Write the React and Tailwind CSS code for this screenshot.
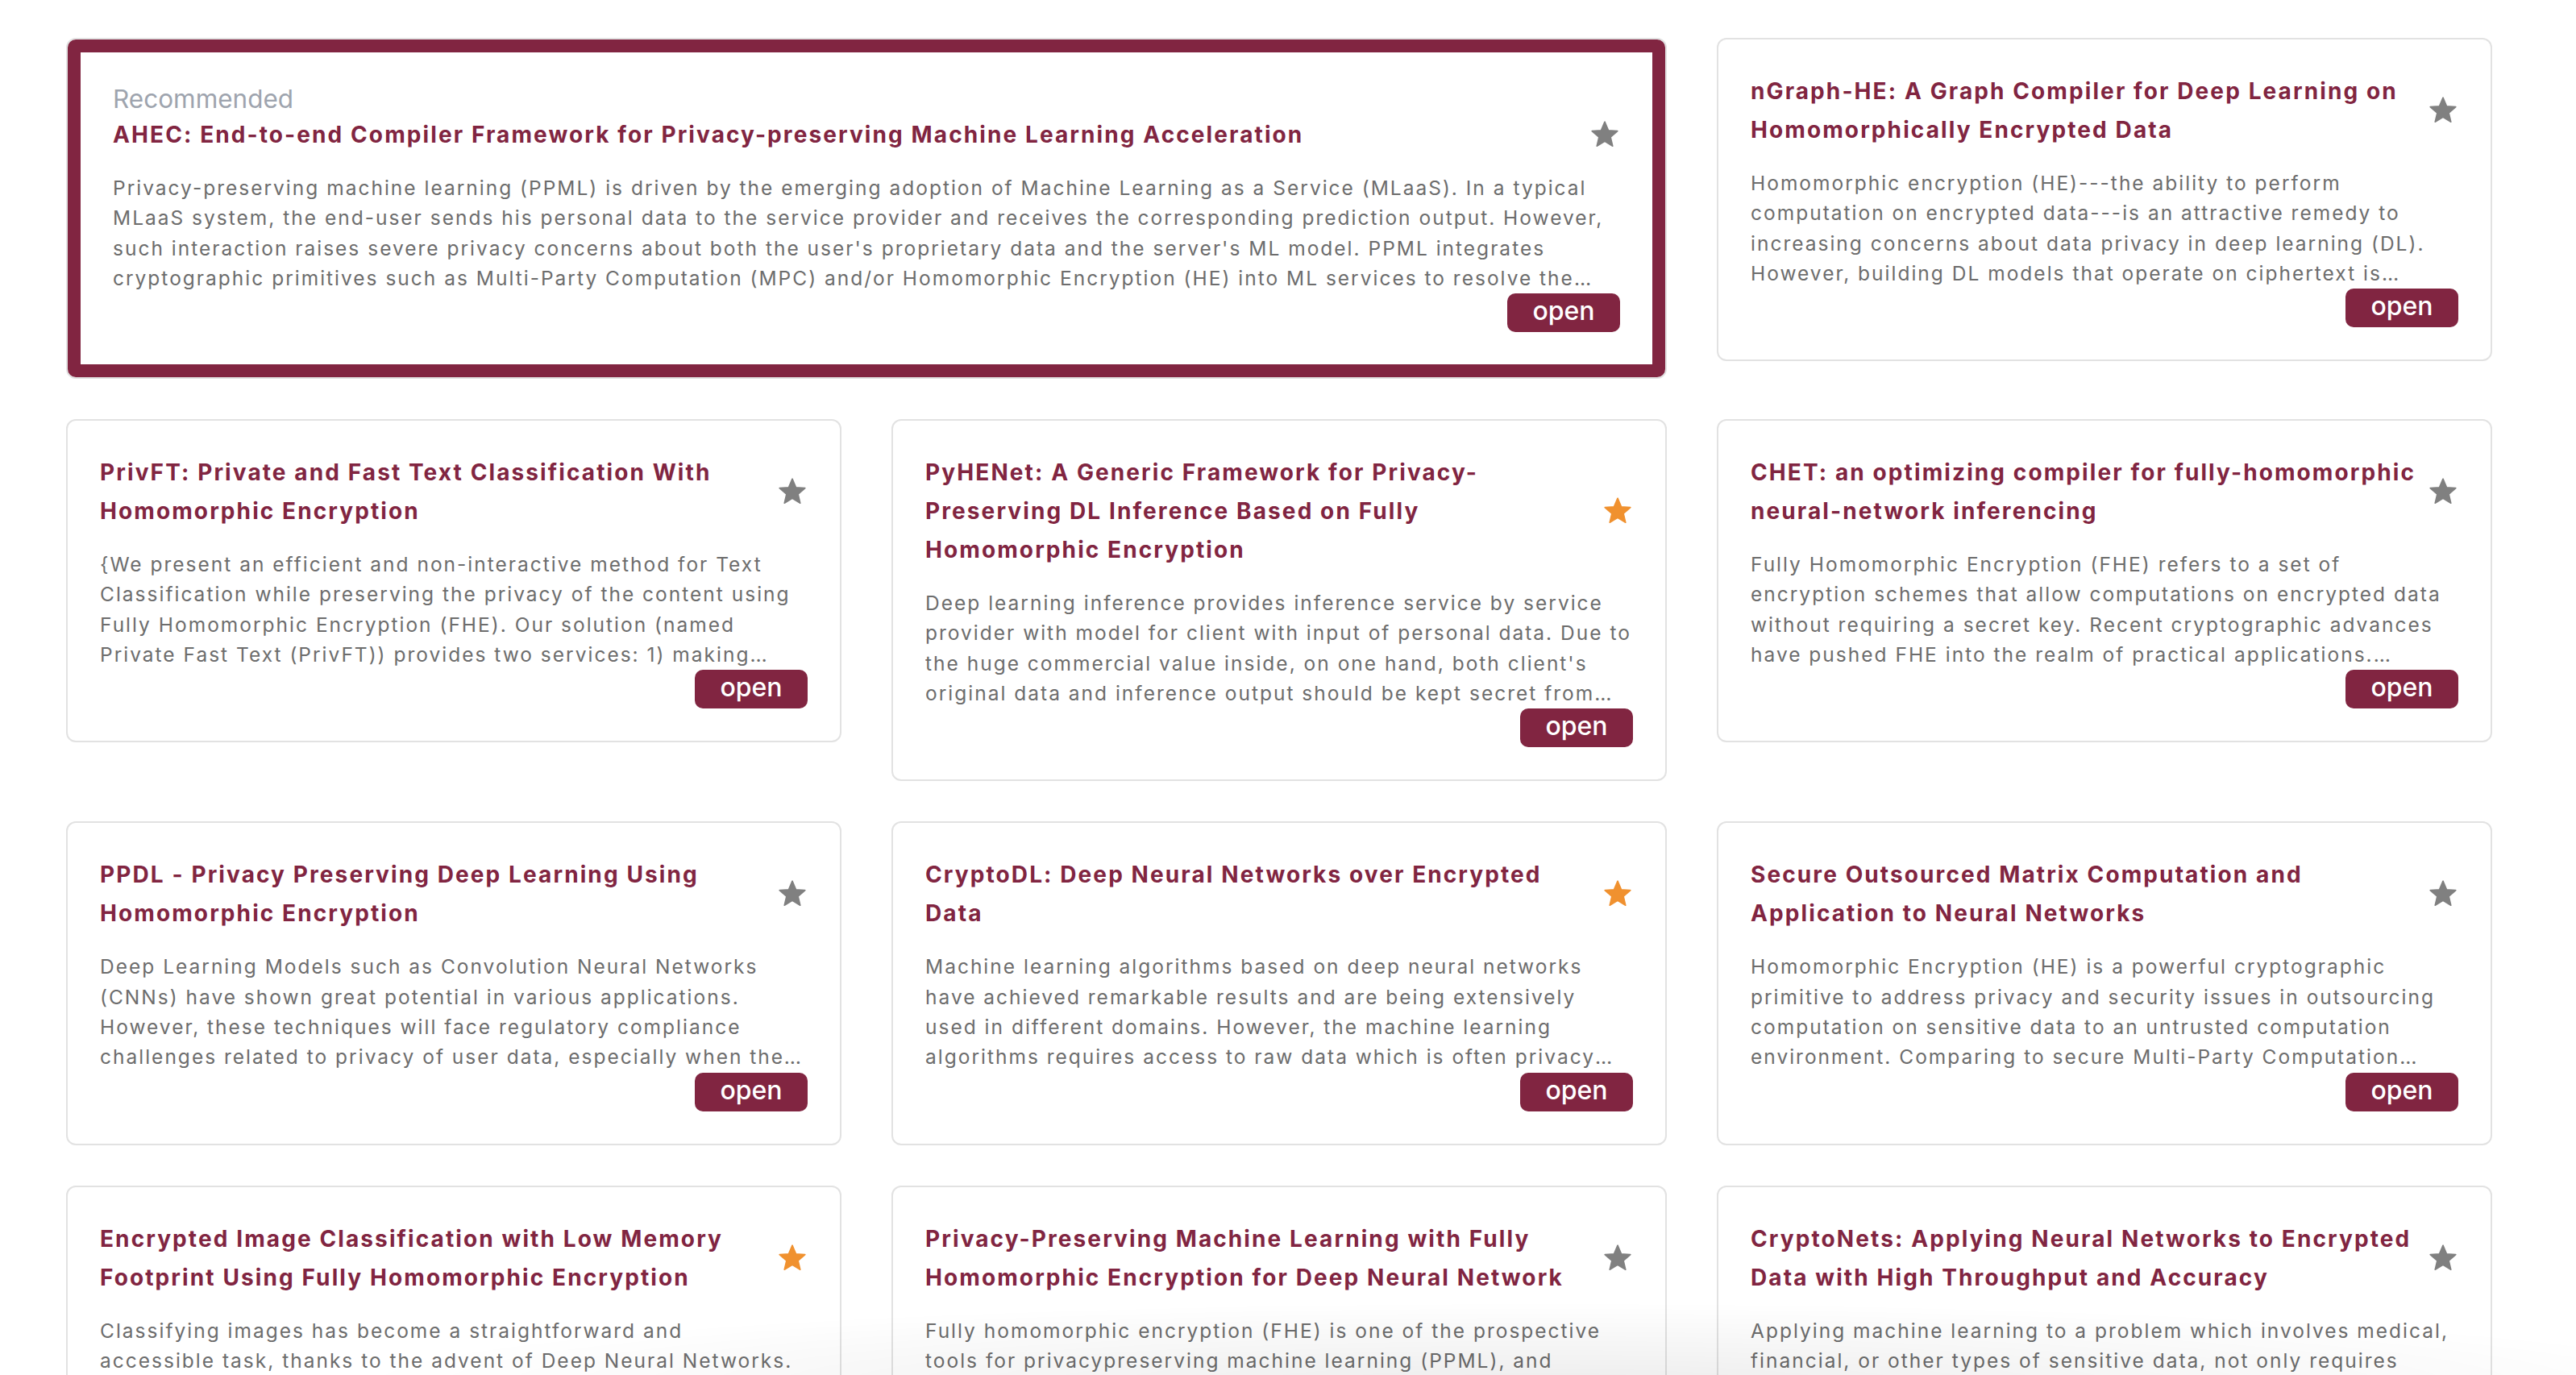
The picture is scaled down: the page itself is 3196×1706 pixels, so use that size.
import React from 'react';

const papers = [
  {
    title: 'AHEC: End-to-end Compiler Framework for Privacy-preserving Machine Learning Acceleration',
    starred: false,
    featured: true,
    abstract:
      "Privacy-preserving machine learning (PPML) is driven by the emerging adoption of Machine Learning as a Service (MLaaS). In a typical MLaaS system, the end-user sends his personal data to the service provider and receives the corresponding prediction output. However, such interaction raises severe privacy concerns about both the user's proprietary data and the server's ML model. PPML integrates cryptographic primitives such as Multi-Party Computation (MPC) and/or Homomorphic Encryption (HE) into ML services to resolve the privacy issues. However, existing PPML solutions have not been widely adopted.",
  },
  {
    title: 'nGraph-HE: A Graph Compiler for Deep Learning on Homomorphically Encrypted Data',
    starred: false,
    abstract:
      'Homomorphic encryption (HE)---the ability to perform computation on encrypted data---is an attractive remedy to increasing concerns about data privacy in deep learning (DL). However, building DL models that operate on ciphertext is currently labor-intensive and requires simultaneous expertise in DL, cryptography, and software engineering.',
  },
  {
    title: 'PrivFT: Private and Fast Text Classification With Homomorphic Encryption',
    starred: false,
    abstract:
      '{We present an efficient and non-interactive method for Text Classification while preserving the privacy of the content using Fully Homomorphic Encryption (FHE). Our solution (named Private Fast Text (PrivFT)) provides two services: 1) making inference of encrypted user inputs using a non-encrypted model and 2) training an effective model using an encrypted dataset.',
  },
  {
    title: 'PyHENet: A Generic Framework for Privacy-Preserving DL Inference Based on Fully Homomorphic\u00a0Encryption',
    starred: true,
    abstract:
      "Deep learning inference provides inference service by service provider with model for client with input of personal data. Due to the huge commercial value inside, on one hand, both client's original data and inference output should be kept secret from the service provider, on the other hand, the model should be kept secret from the client.",
  },
  {
    title: 'CHET: an optimizing compiler for fully-homomorphic neural-network inferencing',
    starred: false,
    abstract:
      'Fully Homomorphic Encryption (FHE) refers to a set of encryption schemes that allow computations on encrypted data without requiring a secret key. Recent cryptographic advances have pushed FHE into the realm of practical applications. However, programming these applications remains a huge challenge.',
  },
  {
    title: 'PPDL - Privacy Preserving Deep Learning Using Homomorphic Encryption',
    starred: false,
    abstract:
      'Deep Learning Models such as Convolution Neural Networks (CNNs) have shown great potential in various applications. However, these techniques will face regulatory compliance challenges related to privacy of user data, especially when they are deployed as a service on a cloud platform.',
  },
  {
    title: 'CryptoDL: Deep Neural Networks over Encrypted Data',
    starred: true,
    abstract:
      'Machine learning algorithms based on deep neural networks have achieved remarkable results and are being extensively used in different domains. However, the machine learning algorithms requires access to raw data which is often privacy sensitive. To address this issue, we develop new techniques.',
  },
  {
    title: 'Secure Outsourced Matrix Computation and Application to Neural Networks',
    starred: false,
    abstract:
      'Homomorphic Encryption (HE) is a powerful cryptographic primitive to address privacy and security issues in outsourcing computation on sensitive data to an untrusted computation environment. Comparing to secure Multi-Party Computation (MPC), HE has advantages in supporting non-interactive operations.',
  },
  {
    title: 'Encrypted Image Classification with Low Memory Footprint Using Fully Homomorphic Encryption',
    starred: true,
    abstract:
      'Classifying images has become a straightforward and accessible\u00a0task, thanks to the advent of Deep Neural Networks. Nevertheless, not much attention is given to the privacy concerns associated with sensitive data contained in images.',
  },
  {
    title: 'Privacy-Preserving Machine Learning with Fully Homomorphic Encryption for Deep Neural Network',
    starred: false,
    abstract:
      'Fully homomorphic encryption (FHE) is one of the prospective tools for privacypreserving machine learning (PPML), and several PPML models have been proposed based on various FHE schemes and approaches.',
  },
  {
    title: 'CryptoNets: Applying Neural Networks to Encrypted Data with High Throughput and Accuracy',
    starred: false,
    abstract:
      'Applying machine learning to a problem which involves medical, financial, or other types of sensitive data, not only requires accurate predictions but also careful attention to maintaining data privacy and security.',
  },
];

const StarIcon = ({ on }) => (
  <svg
    viewBox="0 0 24 24"
    className="w-[38px] h-[38px] shrink-0"
    fill={on ? '#f0912f' : '#808080'}
    stroke={on ? '#f0912f' : '#808080'}
    strokeWidth="1"
    strokeLinejoin="round"
  >
    <path d="M12 17.27L18.18 21l-1.64-7.03L22 9.24l-7.19-.61L12 2 9.19 8.63 2 9.24l5.46 4.73L5.82 21z" />
  </svg>
);

const CardBody = ({ paper }) => (
  <>
    {paper.featured && (
      <div className="text-[31.5px] leading-[40px] text-[#9ea4ae]">Recommended</div>
    )}
    <div className="flex items-center gap-[6px]">
      <h3 className="flex-1 text-[28px] leading-[48px] font-bold tracking-[2.1px] text-[#812541]">
        {paper.title}
      </h3>
      <StarIcon on={paper.starred} />
    </div>
    <p className="mt-[24px] text-[24.5px] leading-[37.3px] tracking-[2px] text-[#6d6d6d] line-clamp-4">
      {paper.abstract}
    </p>
    <div className="flex justify-end">
      <button className="w-[140px] h-[48px] rounded-[10px] bg-[#812541] text-white text-[32px] font-medium leading-none pb-[4px]">
        open
      </button>
    </div>
  </>
);

const PaperCard = ({ paper }) => {
  if (paper.featured) {
    return (
      <div className="col-span-2 border-2 border-[#e2e2e2] rounded-[12px] bg-white">
        <div className="border-[16px] border-[#812541] rounded-[10px] px-[40px] pt-[38px] pb-[40px]">
          <CardBody paper={paper} />
        </div>
      </div>
    );
  }
  return (
    <div className="border-2 border-[#e2e2e2] rounded-[12px] bg-white p-[40px]">
      <CardBody paper={paper} />
    </div>
  );
};

export default function App() {
  return (
    <div
      className="relative min-h-screen bg-white overflow-hidden"
      style={{ fontFamily: 'Inter, "Noto Sans", sans-serif' }}
    >
      <div className="grid grid-cols-[repeat(3,962px)] gap-x-[62px] gap-y-[50px] items-start pl-[82px] pt-[47px] pb-[60px]">
        {papers.map((p) => (
          <PaperCard key={p.title} paper={p} />
        ))}
      </div>
      <div className="pointer-events-none fixed bottom-0 left-0 right-0 h-[120px] bg-[radial-gradient(ellipse_at_60%_110%,rgba(0,0,0,0.07),transparent_55%)]" />
    </div>
  );
}
